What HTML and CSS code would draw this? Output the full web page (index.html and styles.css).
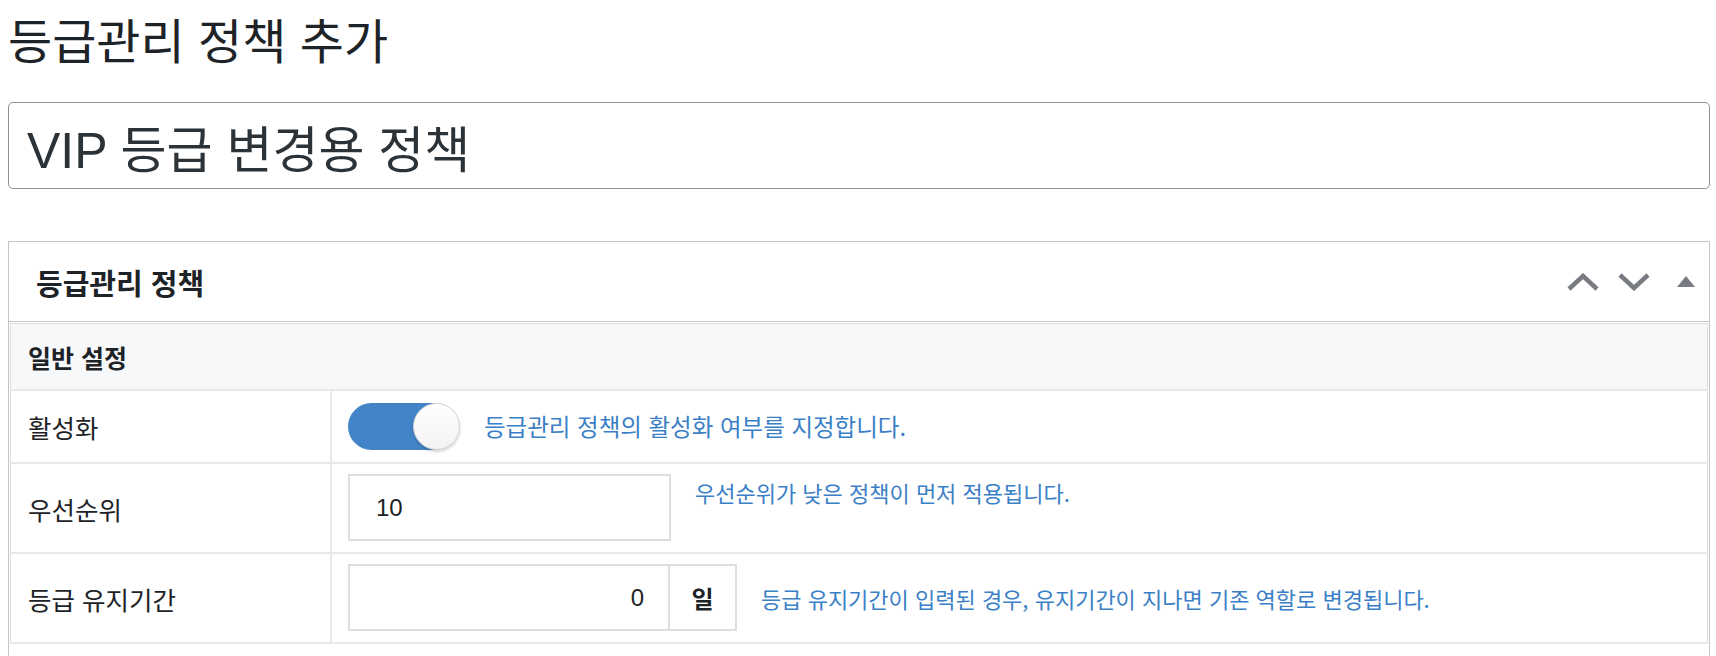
FILE: index.html
```html
<!DOCTYPE html>
<html lang="ko">
<head>
    <meta charset="UTF-8">
    <meta name="viewport" content="width=device-width, initial-scale=1.0">
    <title>등급관리 정책 추가</title>
    <link rel="stylesheet" href="styles.css">
</head>
<body>

    <div class="wrap">
        <h1 class="page-title">등급관리 정책 추가</h1>

        <input type="text" class="title-input" name="post_title" value="VIP 등급 변경용 정책">

        <div class="postbox">
            <div class="postbox-header">
                <h2 class="hndle">등급관리 정책</h2>
                <div class="handle-actions">
                    <button type="button" class="handle-btn" aria-label="위로 이동">
                        <svg width="32" height="18" viewBox="0 0 32 18"><polyline points="2,16 16,3 30,16" fill="none" stroke="#787c82" stroke-width="4.5"/></svg>
                    </button>
                    <button type="button" class="handle-btn" aria-label="아래로 이동">
                        <svg width="32" height="18" viewBox="0 0 32 18"><polyline points="2,2 16,15 30,2" fill="none" stroke="#787c82" stroke-width="4.5"/></svg>
                    </button>
                    <button type="button" class="handle-btn toggle-indicator" aria-label="패널 접기">
                        <svg width="18" height="12" viewBox="0 0 18 12"><polygon points="9,0 18,11 0,11" fill="#787c82"/></svg>
                    </button>
                </div>
            </div>

            <div class="inside">
                <table class="form-table">
                    <tr class="section-row">
                        <th colspan="2">일반 설정</th>
                    </tr>
                    <tr>
                        <td class="label-cell">활성화</td>
                        <td class="field-cell">
                            <div class="field center">
                                <label class="switch">
                                    <input type="checkbox" checked>
                                    <span class="slider"></span>
                                </label>
                                <span class="description large">등급관리 정책의 활성화 여부를 지정합니다.</span>
                            </div>
                        </td>
                    </tr>
                    <tr>
                        <td class="label-cell">우선순위</td>
                        <td class="field-cell">
                            <div class="field">
                                <input type="text" class="text-field" value="10">
                                <span class="description top">우선순위가 낮은 정책이 먼저 적용됩니다.</span>
                            </div>
                        </td>
                    </tr>
                    <tr>
                        <td class="label-cell">등급 유지기간</td>
                        <td class="field-cell">
                            <div class="field center">
                                <div class="input-group">
                                    <input type="text" class="text-field right" value="0">
                                    <span class="addon">일</span>
                                </div>
                                <span class="description">등급 유지기간이 입력된 경우, 유지기간이 지나면 기존 역할로 변경됩니다.</span>
                            </div>
                        </td>
                    </tr>
                </table>
            </div>
        </div>
    </div>

</body>
</html>
```

FILE: styles.css
```css
/* styles.css */

body {
    margin: 0;
    font-family: "Liberation Sans", "Noto Sans CJK KR", sans-serif;
    color: #1d2327;
    background: #fff;
}

.wrap {
    padding: 6px 6px 0 8px;
}

.page-title {
    margin: 0;
    font-family: "Noto Sans CJK KR", sans-serif;
    font-size: 48px;
    font-weight: 400;
    line-height: 64px;
}

.title-input {
    display: block;
    box-sizing: border-box;
    width: 100%;
    height: 87px;
    margin-top: 32px;
    padding: 0 18px;
    font-family: "Liberation Sans", "Noto Sans CJK KR", sans-serif;
    font-size: 50px;
    color: #2c3338;
    border: 1px solid #8c8f94;
    border-radius: 5px;
    outline: none;
}

.postbox {
    margin-top: 52px;
    border: 1px solid #c3c4c7;
    border-bottom: none;
    padding-bottom: 60px;
}

.postbox-header {
    display: flex;
    align-items: center;
    justify-content: space-between;
    height: 79px;
    border-bottom: 1px solid #c3c4c7;
}

.hndle {
    margin: 0;
    padding-left: 27px;
    font-family: "Noto Sans CJK KR", sans-serif;
    font-size: 29px;
    font-weight: 700;
}

.handle-actions {
    display: flex;
    align-items: center;
    padding-right: 14px;
}

.handle-btn {
    background: none;
    border: none;
    padding: 0;
    margin-left: 19px;
    display: flex;
    cursor: pointer;
}

.toggle-indicator {
    margin-left: 27px;
}

.inside {
    padding: 0 1px;
}

.form-table {
    width: 100%;
    border-collapse: collapse;
    margin-top: 1px;
    border: 1px solid #dcdcde;
}

.form-table td,
.form-table th {
    border-bottom: 2px solid #e8e8e8;
}

.section-row th {
    height: 65px;
    padding: 0 0 0 17px;
    text-align: left;
    background: #f7f8fa;
    font-family: "Noto Sans CJK KR", sans-serif;
    font-size: 25px;
    font-weight: 700;
}

.label-cell {
    width: 302px;
    padding: 0 0 0 17px;
    font-family: "Noto Sans CJK KR", sans-serif;
    font-size: 25.5px;
    border-right: 2px solid #e8e8e8;
}

.field-cell {
    padding: 10px 16px 11px 16px;
}

.field {
    display: flex;
    align-items: flex-start;
    gap: 24px;
}

.field.center {
    align-items: center;
}

.description {
    font-family: "Noto Sans CJK KR", sans-serif;
    font-size: 22px;
    color: #3b80c6;
}

.description.large {
    font-size: 23.5px;
}

.description.top {
    margin-top: 2px;
}

/* toggle switch */
.switch {
    position: relative;
    display: inline-block;
    width: 112px;
    height: 47px;
    margin: 2px 0 1px;
}

.switch input {
    opacity: 0;
    width: 0;
    height: 0;
}

.slider {
    position: absolute;
    top: 0;
    left: 0;
    right: 4px;
    bottom: 0;
    background: #4384c8;
    border-radius: 24px;
    cursor: pointer;
}

.slider:before {
    content: "";
    position: absolute;
    top: 0;
    right: -4px;
    width: 45px;
    height: 45px;
    background: linear-gradient(#fff, #f3f3f3);
    border: 1px solid #d2d2d2;
    border-radius: 50%;
    box-shadow: 0 2px 3px rgba(0, 0, 0, 0.18);
}

.text-field {
    box-sizing: border-box;
    width: 323px;
    height: 67px;
    padding: 0 26px;
    font-family: "Liberation Sans", "Noto Sans CJK KR", sans-serif;
    font-size: 24px;
    color: #1d2327;
    border: 2px solid #dedede;
    border-radius: 0;
    outline: none;
}

.text-field.right {
    width: 322px;
    text-align: right;
    padding-right: 24px;
}

.input-group {
    display: flex;
}

.addon {
    box-sizing: border-box;
    display: flex;
    align-items: center;
    justify-content: center;
    width: 67px;
    height: 67px;
    border: 2px solid #dedede;
    border-left: none;
    font-family: "Noto Sans CJK KR", sans-serif;
    font-size: 24px;
    font-weight: 700;
}
```
